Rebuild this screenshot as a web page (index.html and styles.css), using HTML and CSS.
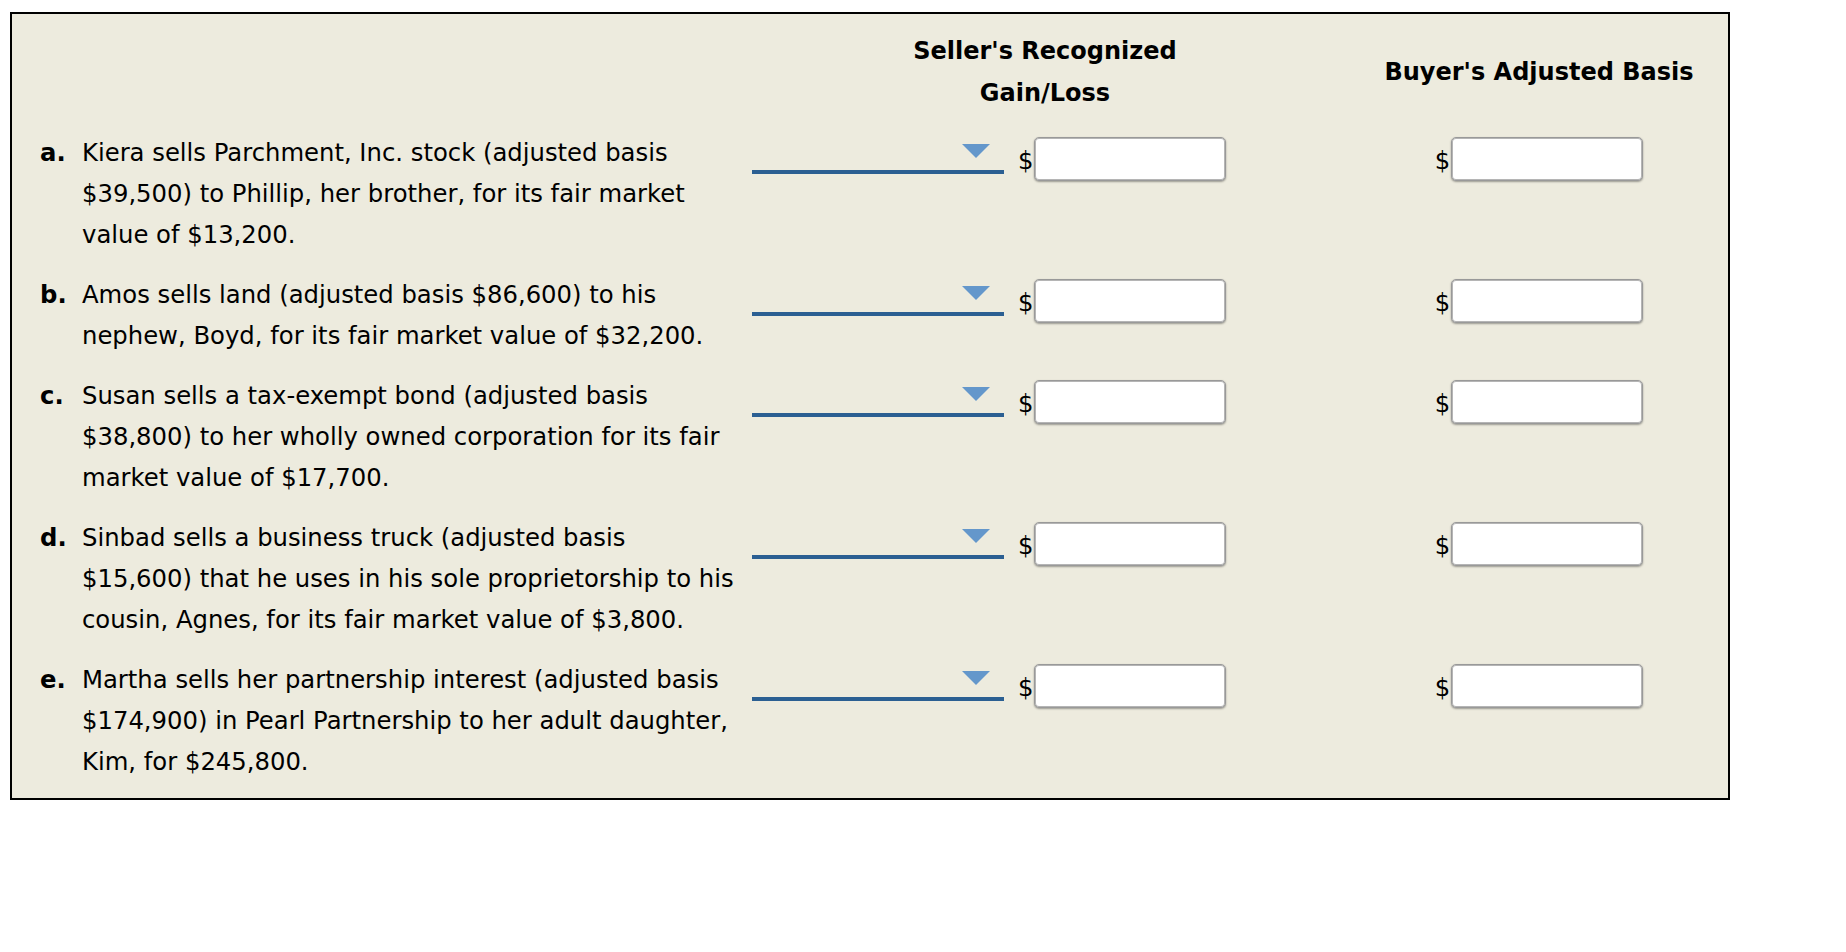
FILE: index.html
```html
<!DOCTYPE html>
<html lang="en">
<head>
    <meta charset="UTF-8">
    <title>Related party sales</title>
    <link rel="stylesheet" href="styles.css">
</head>
<body>
    <div class="panel">
        <div class="sheet">
            <div class="head-blank"></div>
            <div class="head">Seller's Recognized<br>Gain/Loss</div>
            <div class="head head-single">Buyer's Adjusted Basis</div>

            <div class="desc"><b class="tag">a.</b><span class="txt">Kiera sells Parchment, Inc. stock (adjusted basis<br>$39,500) to Phillip, her brother, for its fair market<br>value of $13,200.</span></div>
            <div class="seller">
                <div class="pick"><span class="arrow"></span></div>
                <span class="cur">$</span><input class="amt" type="text">
            </div>
            <div class="buyer"><span class="cur">$</span><input class="amt" type="text"></div>

            <div class="desc"><b class="tag">b.</b><span class="txt">Amos sells land (adjusted basis $86,600) to his<br>nephew, Boyd, for its fair market value of $32,200.</span></div>
            <div class="seller">
                <div class="pick"><span class="arrow"></span></div>
                <span class="cur">$</span><input class="amt" type="text">
            </div>
            <div class="buyer"><span class="cur">$</span><input class="amt" type="text"></div>

            <div class="desc"><b class="tag">c.</b><span class="txt">Susan sells a tax-exempt bond (adjusted basis<br>$38,800) to her wholly owned corporation for its fair<br>market value of $17,700.</span></div>
            <div class="seller">
                <div class="pick"><span class="arrow"></span></div>
                <span class="cur">$</span><input class="amt" type="text">
            </div>
            <div class="buyer"><span class="cur">$</span><input class="amt" type="text"></div>

            <div class="desc"><b class="tag">d.</b><span class="txt">Sinbad sells a business truck (adjusted basis<br>$15,600) that he uses in his sole proprietorship to his<br>cousin, Agnes, for its fair market value of $3,800.</span></div>
            <div class="seller">
                <div class="pick"><span class="arrow"></span></div>
                <span class="cur">$</span><input class="amt" type="text">
            </div>
            <div class="buyer"><span class="cur">$</span><input class="amt" type="text"></div>

            <div class="desc"><b class="tag">e.</b><span class="txt">Martha sells her partnership interest (adjusted basis<br>$174,900) in Pearl Partnership to her adult daughter,<br>Kim, for $245,800.</span></div>
            <div class="seller">
                <div class="pick"><span class="arrow"></span></div>
                <span class="cur">$</span><input class="amt" type="text">
            </div>
            <div class="buyer"><span class="cur">$</span><input class="amt" type="text"></div>
        </div>
    </div>
</body>
</html>
```

FILE: styles.css
```css
body {
    margin: 0;
    padding: 12px 0 0 10px;
    font-family: "DejaVu Sans", Verdana, sans-serif;
    color: #000;
    background: #fff;
}

.panel {
    width: 1716px;
    border: 2px solid #000;
    background-color: #edebde;
    padding: 16px 0 16px 0;
}

.sheet {
    display: grid;
    grid-template-columns: 728px 610px 378px;
    row-gap: 19px;
    font-size: 24.3px;
    line-height: 41px;
}

.head {
    font-size: 24px;
    font-weight: bold;
    text-align: center;
    line-height: 42px;
    margin-bottom: -1px;
}
.head-single {
    align-self: center;
}

.desc {
    display: flex;
    padding-left: 28px;
}
.tag {
    width: 42px;
    flex: none;
}

.seller {
    display: flex;
    align-items: flex-start;
    padding-left: 12px;
}
.buyer {
    display: flex;
    align-items: flex-start;
    justify-content: center;
}

.pick {
    position: relative;
    width: 252px;
    height: 38px;
    border-bottom: 4px solid #2b5f92;
}
.arrow {
    position: absolute;
    right: 14px;
    top: 12px;
    width: 0;
    height: 0;
    border-left: 14px solid transparent;
    border-right: 14px solid transparent;
    border-top: 14px solid #6497cb;
}

.cur {
    margin-top: 8px;
    line-height: 41px;
}
.seller .cur {
    margin-left: 14px;
}

.amt {
    box-sizing: border-box;
    width: 192px;
    height: 44px;
    margin: 5px 0 0 1px;
    border: 1px solid #999;
    border-radius: 5px;
    background: #fff;
    box-shadow: 0 1px 2px rgba(0, 0, 0, 0.35), inset 0 0 0 1px #b5b5b5;
    font-family: inherit;
    font-size: 18px;
}
```
